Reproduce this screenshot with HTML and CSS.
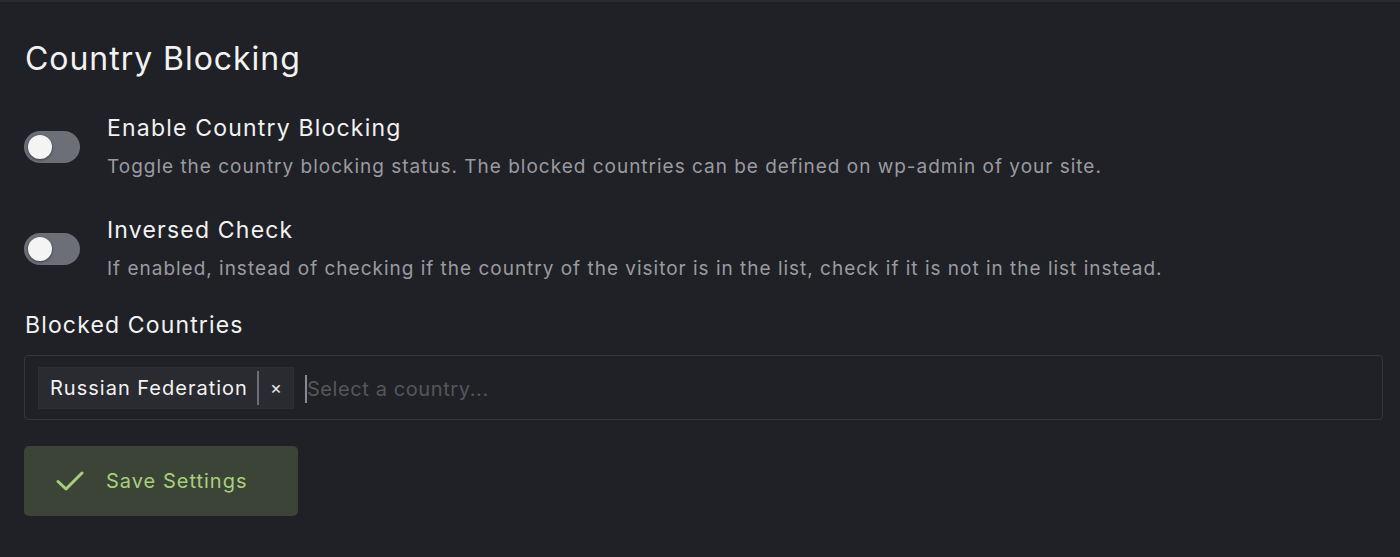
FILE: index.html
```html
<!DOCTYPE html>
<html>
<head>
<meta charset="utf-8">
<link rel="stylesheet" href="styles.css">
</head>
<body>
<div class="page">
  <h1 class="title">Country Blocking</h1>

  <div class="setting">
    <div class="toggle"><span class="knob"></span></div>
    <div class="setting-text">
      <div class="label">Enable Country Blocking</div>
      <div class="desc">Toggle the country blocking status. The blocked countries can be defined on wp-admin of your site.</div>
    </div>
  </div>

  <div class="setting">
    <div class="toggle"><span class="knob"></span></div>
    <div class="setting-text">
      <div class="label">Inversed Check</div>
      <div class="desc">If enabled, instead of checking if the country of the visitor is in the list, check if it is not in the list instead.</div>
    </div>
  </div>

  <div class="field-label">Blocked Countries</div>
  <div class="select">
    <div class="chip">
      <span class="chip-text">Russian Federation</span>
      <span class="chip-remove">×</span>
    </div>
    <div class="input"><span class="caret"></span><span class="placeholder">Select a country...</span></div>
  </div>

  <button class="save">
    <svg class="check" width="30" height="24" viewBox="0 0 30 24"><path d="M3 12.5 L11 20 L27 4" fill="none" stroke="#a8cf7d" stroke-width="3" stroke-linecap="round" stroke-linejoin="round"/></svg>
    <span>Save Settings</span>
  </button>
</div>
</body>
</html>
```

FILE: styles.css
```css
* { box-sizing: border-box; }
html, body {
  margin: 0;
  height: 100%;
}
body {
  background: #202126;
  border-top: 2px solid #2a2b30;
  font-family: Inter, "Noto Sans", sans-serif;
  color: #f2f2f3;
}
.page {
  padding: 37px 17px 0 24px;
}
.title {
  margin: 0 0 0 1px;
  font-size: 32px;
  font-weight: 400;
  line-height: 40px;
  letter-spacing: 0.03em;
}
.setting {
  display: flex;
  align-items: flex-start;
  gap: 27px;
  margin-top: 34px;
}
.setting + .setting { margin-top: 36px; }
.toggle {
  flex: none;
  width: 56px;
  height: 32px;
  border-radius: 16px;
  background: #6c6f77;
  margin-top: 18px;
  display: flex;
  align-items: center;
  padding-left: 4px;
}
.knob {
  width: 24px;
  height: 24px;
  border-radius: 50%;
  background: #f4f4f4;
  box-shadow: 0 1px 3px rgba(0,0,0,0.45);
}
.label {
  font-size: 23px;
  line-height: 30px;
  letter-spacing: 0.052em;
  color: #f2f2f3;
}
.desc {
  margin-top: 12px;
  font-size: 19px;
  line-height: 24px;
  letter-spacing: 0.052em;
  color: #9a9ba1;
}
.field-label {
  margin-top: 29px;
  font-size: 23px;
  line-height: 30px;
  letter-spacing: 0.05em;
  margin-left: 1px;
}
.select {
  margin-top: 15px;
  height: 65px;
  border: 1px solid #34363b;
  border-radius: 4px;
  display: flex;
  align-items: center;
  padding-left: 13px;
  gap: 11px;
}
.chip {
  height: 42px;
  background: #2a2b30;
  border: 1px solid #2e3035;
  display: flex;
  align-items: center;
  padding-left: 11px;
  font-size: 20px;
  letter-spacing: 0.05em;
}
.chip-text {
  padding-right: 9px;
  border-right: 2px solid #6c6e74;
  line-height: 34px;
}
.chip-remove {
  width: 34px;
  text-align: center;
  font-size: 18px;
  letter-spacing: 0;
  color: #e5e5e6;
}
.input {
  display: flex;
  align-items: center;
  font-size: 20px;
  letter-spacing: 0.03em;
  padding-top: 3px;
}
.caret {
  width: 2px;
  height: 28px;
  background: #8a8b90;
}
.placeholder {
  color: #54565b;
}
.save {
  margin-top: 26px;
  width: 274px;
  height: 70px;
  background: #3b4436;
  border: none;
  border-radius: 5px;
  display: flex;
  align-items: center;
  padding-left: 31px;
  gap: 21px;
  font-family: inherit;
  font-size: 20px;
  letter-spacing: 0.05em;
  color: #a9cf7e;
}
.check { display: block; }
```
